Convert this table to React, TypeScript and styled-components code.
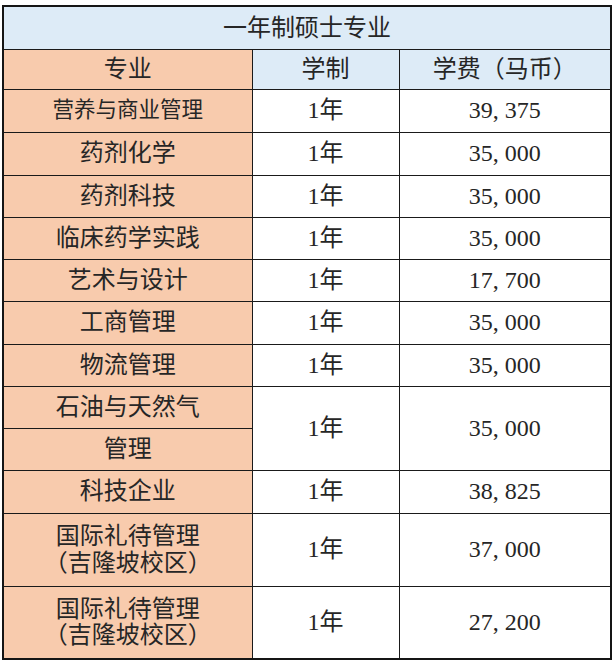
import React from "react";
import styled, { createGlobalStyle } from "styled-components";

const Global = createGlobalStyle`
  html, body { margin: 0; padding: 0; background: #ffffff; }
  body { font-family: "Noto Sans CJK SC", "Noto Sans", sans-serif; }
`;

const Page = styled.div`
  padding: 5px 0 0 2px;
`;

const Table = styled.table`
  border-collapse: collapse;
  table-layout: fixed;
  width: 608px;
  border: 2px solid #151515;
`;

const Cell = styled.td<{ $bg?: string; $h?: number; $size?: number }>`
  box-sizing: border-box;
  border: 1.5px solid #1a1a1a;
  background: ${(p) => p.$bg ?? "#ffffff"};
  height: ${(p) => (p.$h ? `${p.$h}px` : "auto")};
  padding: 0;
  text-align: center;
  vertical-align: middle;
  color: #262626;
  font-family: "Liberation Serif", "Noto Sans CJK SC", serif;
  font-size: ${(p) => p.$size ?? 24}px;
  line-height: 1.1;
  font-weight: 400;
`;

const Stack = styled.div`
  display: flex;
  flex-direction: column;
  align-items: center;
  line-height: 1.1;
`;

const BLUE = "#DDEBF7";
const ORANGE = "#F8CBAD";

type Row = { name: string[]; years: string; fee: string; h: number; size?: number };

const rows: Row[] = [
  { name: ["营养与商业管理"], years: "1年", fee: "39, 375", h: 43, size: 21.5 },
  { name: ["药剂化学"], years: "1年", fee: "35, 000", h: 43 },
  { name: ["药剂科技"], years: "1年", fee: "35, 000", h: 42 },
  { name: ["临床药学实践"], years: "1年", fee: "35, 000", h: 42 },
  { name: ["艺术与设计"], years: "1年", fee: "17, 700", h: 42 },
  { name: ["工商管理"], years: "1年", fee: "35, 000", h: 43 },
  { name: ["物流管理"], years: "1年", fee: "35, 000", h: 42 },
];

const after: Row[] = [
  { name: ["科技企业"], years: "1年", fee: "38, 825", h: 43 },
  { name: ["国际礼待管理", "（吉隆坡校区）"], years: "1年", fee: "37, 000", h: 73 },
  { name: ["国际礼待管理", "（吉隆坡校区）"], years: "1年", fee: "27, 200", h: 73 },
];

const NameCell = ({ r }: { r: Row }) => (
  <Cell $bg={ORANGE} $h={r.h} $size={r.size}>
    {r.name.length > 1 ? (
      <Stack>
        {r.name.map((n, i) => (
          <span key={i}>{n}</span>
        ))}
      </Stack>
    ) : (
      r.name[0]
    )}
  </Cell>
);

const DataRow = ({ r }: { r: Row }) => (
  <tr>
    <NameCell r={r} />
    <Cell>{r.years}</Cell>
    <Cell>{r.fee}</Cell>
  </tr>
);

export default function App() {
  return (
    <>
      <Global />
      <Page>
        <Table>
          <colgroup>
            <col style={{ width: 249 }} />
            <col style={{ width: 147 }} />
            <col style={{ width: 212 }} />
          </colgroup>
          <tbody>
            <tr>
              <Cell colSpan={3} $bg={BLUE} $h={43}>
                一年制硕士专业
              </Cell>
            </tr>
            <tr>
              <Cell $bg={ORANGE} $h={40}>专业</Cell>
              <Cell $bg={BLUE}>学制</Cell>
              <Cell $bg={BLUE}>学费（马币）</Cell>
            </tr>
            {rows.map((r, i) => (
              <DataRow key={i} r={r} />
            ))}
            <tr>
              <Cell $bg={ORANGE} $h={42}>石油与天然气</Cell>
              <Cell rowSpan={2}>1年</Cell>
              <Cell rowSpan={2}>35, 000</Cell>
            </tr>
            <tr>
              <Cell $bg={ORANGE} $h={42}>管理</Cell>
            </tr>
            {after.map((r, i) => (
              <DataRow key={i} r={r} />
            ))}
          </tbody>
        </Table>
      </Page>
    </>
  );
}
